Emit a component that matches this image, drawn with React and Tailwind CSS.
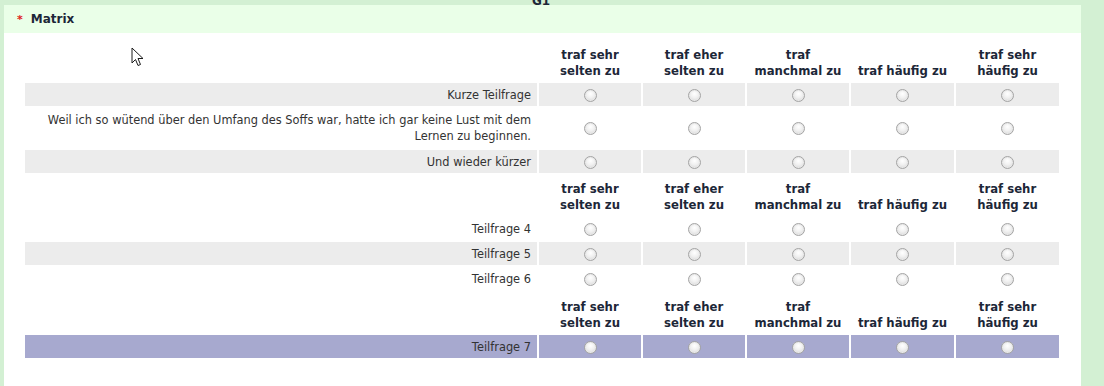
const options = [
  ['traf sehr', 'selten zu'],
  ['traf eher', 'selten zu'],
  ['traf', 'manchmal zu'],
  ['traf häufig zu'],
  ['traf sehr', 'häufig zu'],
];

const Radio = () => (
  <span className="inline-block w-[13px] h-[13px] mt-[1px] rounded-full border border-[#a4a4a4] bg-[radial-gradient(circle_at_50%_35%,#ffffff_0%,#f0f0f0_45%,#cfcfcf_100%)] shadow-[inset_0_0_0_1px_#e8e8e8]" />
);

const HeaderRow = ({ h }) => (
  <>
    <div className={h} />
    {options.map((lines, i) => (
      <div key={i} className={`${h} flex flex-col justify-end items-center pb-[2px] text-[11.7px] leading-[16px] font-bold text-[#1d2738]`}>
        {lines.map((l) => (
          <span key={l} className="whitespace-nowrap">{l}</span>
        ))}
      </div>
    ))}
  </>
);

const Row = ({ label, bg, tall, h = 'h-[23px]' }) => (
  <>
    <div className={`${bg} ${h} flex items-center justify-end text-right pr-[6px] text-[11.4px] leading-[16px] text-[#333]`}>
      {tall ? <span>{label[0]}<br />{label[1]}</span> : label}
    </div>
    {options.map((_, i) => (
      <div key={i} className={`${bg} ${h} flex items-center justify-center`}>
        <Radio />
      </div>
    ))}
  </>
);

const Cursor = () => (
  <svg className="absolute left-[131px] top-[47px]" width="14" height="20" viewBox="0 0 14 20">
    <path d="M1 1 L1 16 L4.5 12.5 L7 18.5 L9.5 17.5 L7 11.5 L12 11.5 Z" fill="#fff" stroke="#1a1a1a" strokeWidth="1" strokeLinejoin="miter" />
  </svg>
);

export default function App() {
  return (
    <div className="relative w-[1104px] h-[386px] overflow-hidden bg-[#d3f0d3] pl-[4px] pt-[5px]" style={{ fontFamily: '"DejaVu Sans", Verdana, sans-serif' }}>
      <div className="absolute left-[532px] top-[-8px] text-[12px] font-bold text-[#1d2738]">G1</div>
      <div className="w-[1077px] h-[400px] bg-white">
        <div className="h-[28px] bg-[#eaffe8] flex items-center pl-[13px] gap-[8px]">
          <span className="text-[#e02020] text-[11px] font-bold leading-none">*</span>
          <span className="text-[12px] font-bold text-[#1d2738]">Matrix</span>
        </div>
        <div className="pl-[21px] pt-[8px]">
          <div className="w-[1034px] grid grid-cols-[512px_102px_102px_102px_103px_103px] gap-x-[2px] gap-y-[2px]">
            <HeaderRow h="h-[40px]" />
            <Row label="Kurze Teilfrage" bg="bg-[#ececec]" />
            <Row label={['Weil ich so wütend über den Umfang des Soffs war, hatte ich gar keine Lust mit dem', 'Lernen zu beginnen.']} bg="bg-white" tall h="h-[40px]" />
            <Row label="Und wieder kürzer" bg="bg-[#ececec]" />
            <HeaderRow h="h-[40px]" />
            <Row label="Teilfrage 4" bg="bg-white" />
            <Row label="Teilfrage 5" bg="bg-[#ececec]" />
            <Row label="Teilfrage 6" bg="bg-white" />
            <HeaderRow h="h-[41px]" />
            <Row label="Teilfrage 7" bg="bg-[#a7a9cf]" />
          </div>
        </div>
      </div>
      <Cursor />
    </div>
  );
}
